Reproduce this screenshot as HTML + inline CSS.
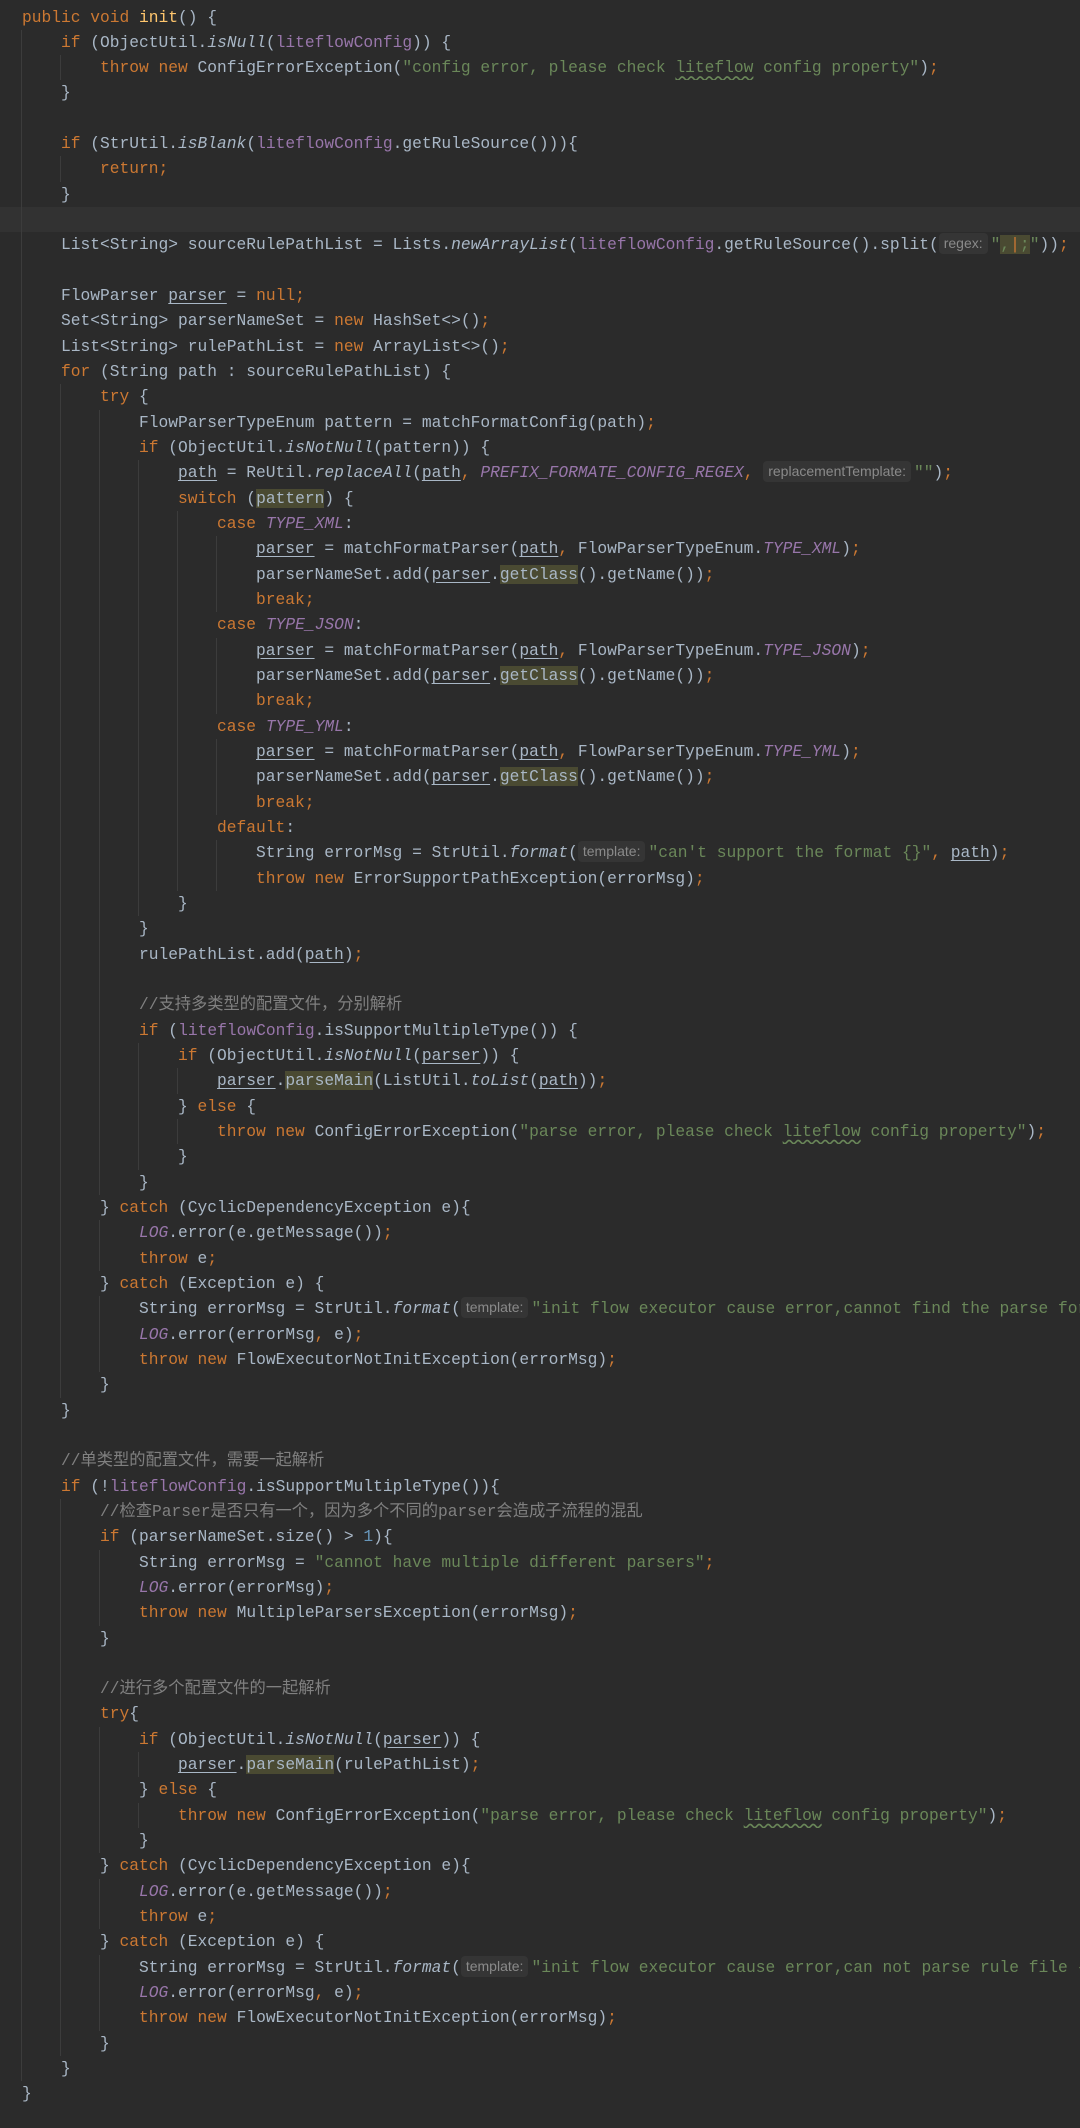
<!DOCTYPE html>
<html><head><meta charset="utf-8">
<style>
html,body{margin:0;padding:0;}
body{width:1080px;height:2128px;background:#2b2b2b;overflow:hidden;position:relative;}
#code{position:absolute;left:0;top:4.5px;width:1080px;}
.l{position:relative;height:25.33px;line-height:25.33px;white-space:pre;padding-left:22px;
 font-family:"Liberation Mono","Noto Sans CJK SC",monospace;font-size:16.25px;color:#a9b7c6;overflow:hidden;}
.l::before{content:"";position:absolute;left:21px;top:0;bottom:0;width:calc(var(--n,0)*39px);
 background:repeating-linear-gradient(to right,#3c3c3c 0 1px,transparent 1px 39px);}
.cur{background:#323232;}
.k{color:#cc7832}.s{color:#6a8759}.f{color:#9876aa}.i{font-style:italic}.fn{color:#ffc66d}
.c{color:#808080}.n{color:#6897bb}.u{text-decoration:underline;text-underline-offset:3px}
.h{background:#4a4a32}
.w{text-decoration:underline wavy #6a8759;text-underline-offset:3px}
.hint{display:inline-block;font-family:"Liberation Sans",sans-serif;font-size:14px;color:#8a8a8a;background:#353535;border-radius:4px;padding:0 5px;line-height:21px;margin-right:3px;vertical-align:1px}
</style></head><body><div id="code">
<div class="l"><span class="k">public void </span><span class="fn">init</span>() {</div>
<div class="l" style="--n:1">    <span class="k">if </span>(ObjectUtil.<span class="i">isNull</span>(<span class="f">liteflowConfig</span>)) {</div>
<div class="l" style="--n:2">        <span class="k">throw new </span>ConfigErrorException(<span class="s">"config error, please check <span class="w">liteflow</span> config property"</span>)<span class="k">;</span></div>
<div class="l" style="--n:1">    }</div>
<div class="l" style="--n:1"></div>
<div class="l" style="--n:1">    <span class="k">if </span>(StrUtil.<span class="i">isBlank</span>(<span class="f">liteflowConfig</span>.getRuleSource())){</div>
<div class="l" style="--n:2">        <span class="k">return;</span></div>
<div class="l" style="--n:1">    }</div>
<div class="l cur" style="--n:1"></div>
<div class="l" style="--n:1">    List&lt;String&gt; sourceRulePathList = Lists.<span class="i">newArrayList</span>(<span class="f">liteflowConfig</span>.getRuleSource().split(<span class="hint">regex:</span><span class="s">"<span class="h">,<span class="k">|</span>;</span>"</span>))<span class="k">;</span></div>
<div class="l" style="--n:1"></div>
<div class="l" style="--n:1">    FlowParser <span class="u">parser</span> = <span class="k">null;</span></div>
<div class="l" style="--n:1">    Set&lt;String&gt; parserNameSet = <span class="k">new </span>HashSet&lt;&gt;()<span class="k">;</span></div>
<div class="l" style="--n:1">    List&lt;String&gt; rulePathList = <span class="k">new </span>ArrayList&lt;&gt;()<span class="k">;</span></div>
<div class="l" style="--n:1">    <span class="k">for </span>(String path : sourceRulePathList) {</div>
<div class="l" style="--n:2">        <span class="k">try </span>{</div>
<div class="l" style="--n:3">            FlowParserTypeEnum pattern = matchFormatConfig(path)<span class="k">;</span></div>
<div class="l" style="--n:3">            <span class="k">if </span>(ObjectUtil.<span class="i">isNotNull</span>(pattern)) {</div>
<div class="l" style="--n:4">                <span class="u">path</span> = ReUtil.<span class="i">replaceAll</span>(<span class="u">path</span><span class="k">, </span><span class="f i">PREFIX_FORMATE_CONFIG_REGEX</span><span class="k">, </span><span class="hint">replacementTemplate:</span><span class="s">""</span>)<span class="k">;</span></div>
<div class="l" style="--n:4">                <span class="k">switch </span>(<span class="h">pattern</span>) {</div>
<div class="l" style="--n:5">                    <span class="k">case </span><span class="f i">TYPE_XML</span>:</div>
<div class="l" style="--n:6">                        <span class="u">parser</span> = matchFormatParser(<span class="u">path</span><span class="k">, </span>FlowParserTypeEnum.<span class="f i">TYPE_XML</span>)<span class="k">;</span></div>
<div class="l" style="--n:6">                        parserNameSet.add(<span class="u">parser</span>.<span class="h">getClass</span>().getName())<span class="k">;</span></div>
<div class="l" style="--n:6">                        <span class="k">break;</span></div>
<div class="l" style="--n:5">                    <span class="k">case </span><span class="f i">TYPE_JSON</span>:</div>
<div class="l" style="--n:6">                        <span class="u">parser</span> = matchFormatParser(<span class="u">path</span><span class="k">, </span>FlowParserTypeEnum.<span class="f i">TYPE_JSON</span>)<span class="k">;</span></div>
<div class="l" style="--n:6">                        parserNameSet.add(<span class="u">parser</span>.<span class="h">getClass</span>().getName())<span class="k">;</span></div>
<div class="l" style="--n:6">                        <span class="k">break;</span></div>
<div class="l" style="--n:5">                    <span class="k">case </span><span class="f i">TYPE_YML</span>:</div>
<div class="l" style="--n:6">                        <span class="u">parser</span> = matchFormatParser(<span class="u">path</span><span class="k">, </span>FlowParserTypeEnum.<span class="f i">TYPE_YML</span>)<span class="k">;</span></div>
<div class="l" style="--n:6">                        parserNameSet.add(<span class="u">parser</span>.<span class="h">getClass</span>().getName())<span class="k">;</span></div>
<div class="l" style="--n:6">                        <span class="k">break;</span></div>
<div class="l" style="--n:5">                    <span class="k">default</span>:</div>
<div class="l" style="--n:6">                        String errorMsg = StrUtil.<span class="i">format</span>(<span class="hint">template:</span><span class="s">"can't support the format {}"</span><span class="k">, </span><span class="u">path</span>)<span class="k">;</span></div>
<div class="l" style="--n:6">                        <span class="k">throw new </span>ErrorSupportPathException(errorMsg)<span class="k">;</span></div>
<div class="l" style="--n:4">                }</div>
<div class="l" style="--n:3">            }</div>
<div class="l" style="--n:3">            rulePathList.add(<span class="u">path</span>)<span class="k">;</span></div>
<div class="l" style="--n:3"></div>
<div class="l" style="--n:3">            <span class="c">//支持多类型的配置文件，分别解析</span></div>
<div class="l" style="--n:3">            <span class="k">if </span>(<span class="f">liteflowConfig</span>.isSupportMultipleType()) {</div>
<div class="l" style="--n:4">                <span class="k">if </span>(ObjectUtil.<span class="i">isNotNull</span>(<span class="u">parser</span>)) {</div>
<div class="l" style="--n:5">                    <span class="u">parser</span>.<span class="h">parseMain</span>(ListUtil.<span class="i">toList</span>(<span class="u">path</span>))<span class="k">;</span></div>
<div class="l" style="--n:4">                } <span class="k">else </span>{</div>
<div class="l" style="--n:5">                    <span class="k">throw new </span>ConfigErrorException(<span class="s">"parse error, please check <span class="w">liteflow</span> config property"</span>)<span class="k">;</span></div>
<div class="l" style="--n:4">                }</div>
<div class="l" style="--n:3">            }</div>
<div class="l" style="--n:2">        } <span class="k">catch </span>(CyclicDependencyException e){</div>
<div class="l" style="--n:3">            <span class="f i">LOG</span>.error(e.getMessage())<span class="k">;</span></div>
<div class="l" style="--n:3">            <span class="k">throw </span>e<span class="k">;</span></div>
<div class="l" style="--n:2">        } <span class="k">catch </span>(Exception e) {</div>
<div class="l" style="--n:3">            String errorMsg = StrUtil.<span class="i">format</span>(<span class="hint">template:</span><span class="s">"init flow executor cause error,cannot find the parse for path {}"</span><span class="k">, </span><span class="u">path</span>)<span class="k">;</span></div>
<div class="l" style="--n:3">            <span class="f i">LOG</span>.error(errorMsg<span class="k">, </span>e)<span class="k">;</span></div>
<div class="l" style="--n:3">            <span class="k">throw new </span>FlowExecutorNotInitException(errorMsg)<span class="k">;</span></div>
<div class="l" style="--n:2">        }</div>
<div class="l" style="--n:1">    }</div>
<div class="l" style="--n:1"></div>
<div class="l" style="--n:1">    <span class="c">//单类型的配置文件，需要一起解析</span></div>
<div class="l" style="--n:1">    <span class="k">if </span>(!<span class="f">liteflowConfig</span>.isSupportMultipleType()){</div>
<div class="l" style="--n:2">        <span class="c">//检查Parser是否只有一个，因为多个不同的parser会造成子流程的混乱</span></div>
<div class="l" style="--n:2">        <span class="k">if </span>(parserNameSet.size() &gt; <span class="n">1</span>){</div>
<div class="l" style="--n:3">            String errorMsg = <span class="s">"cannot have multiple different parsers"</span><span class="k">;</span></div>
<div class="l" style="--n:3">            <span class="f i">LOG</span>.error(errorMsg)<span class="k">;</span></div>
<div class="l" style="--n:3">            <span class="k">throw new </span>MultipleParsersException(errorMsg)<span class="k">;</span></div>
<div class="l" style="--n:2">        }</div>
<div class="l" style="--n:2"></div>
<div class="l" style="--n:2">        <span class="c">//进行多个配置文件的一起解析</span></div>
<div class="l" style="--n:2">        <span class="k">try</span>{</div>
<div class="l" style="--n:3">            <span class="k">if </span>(ObjectUtil.<span class="i">isNotNull</span>(<span class="u">parser</span>)) {</div>
<div class="l" style="--n:4">                <span class="u">parser</span>.<span class="h">parseMain</span>(rulePathList)<span class="k">;</span></div>
<div class="l" style="--n:3">            } <span class="k">else </span>{</div>
<div class="l" style="--n:4">                <span class="k">throw new </span>ConfigErrorException(<span class="s">"parse error, please check <span class="w">liteflow</span> config property"</span>)<span class="k">;</span></div>
<div class="l" style="--n:3">            }</div>
<div class="l" style="--n:2">        } <span class="k">catch </span>(CyclicDependencyException e){</div>
<div class="l" style="--n:3">            <span class="f i">LOG</span>.error(e.getMessage())<span class="k">;</span></div>
<div class="l" style="--n:3">            <span class="k">throw </span>e<span class="k">;</span></div>
<div class="l" style="--n:2">        } <span class="k">catch </span>(Exception e) {</div>
<div class="l" style="--n:3">            String errorMsg = StrUtil.<span class="i">format</span>(<span class="hint">template:</span><span class="s">"init flow executor cause error,can not parse rule file {}"</span><span class="k">, </span>rulePathList)<span class="k">;</span></div>
<div class="l" style="--n:3">            <span class="f i">LOG</span>.error(errorMsg<span class="k">, </span>e)<span class="k">;</span></div>
<div class="l" style="--n:3">            <span class="k">throw new </span>FlowExecutorNotInitException(errorMsg)<span class="k">;</span></div>
<div class="l" style="--n:2">        }</div>
<div class="l" style="--n:1">    }</div>
<div class="l">}</div>
</div></body></html>
